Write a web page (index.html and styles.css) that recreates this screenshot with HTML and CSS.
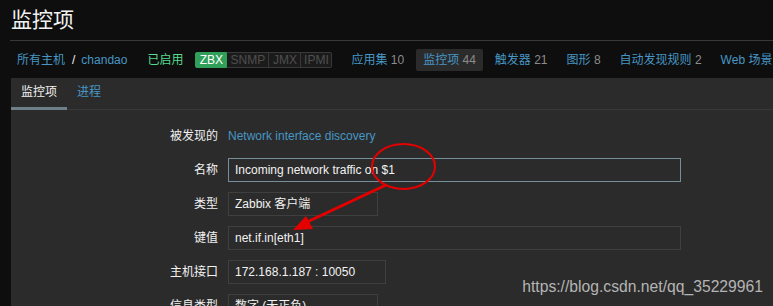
FILE: index.html
```html
<!DOCTYPE html>
<html lang="zh-CN">
<head>
    <meta charset="UTF-8">
    <title>监控项 - Zabbix</title>
    <link rel="stylesheet" href="styles.css">
</head>
<body>
    <div class="page">
        <!-- Header -->
        <div class="header">
            <h1>监控项</h1>
        </div>

        <!-- Host navigation -->
        <div class="host-nav">
            <span class="breadcrumb">
                <a href="#">所有主机</a><span class="slash">/</span><a href="#">chandao</a>
            </span>
            <span class="status-on">已启用</span>
            <span class="badges">
                <span class="badge badge-on zbx">ZBX</span>
                <span class="badge snmp">SNMP</span>
                <span class="badge jmx">JMX</span>
                <span class="badge ipmi">IPMI</span>
            </span>
            <a class="nav-item" href="#">应用集 <span class="count">10</span></a>
            <a class="nav-item selected" href="#">监控项 <span class="count">44</span></a>
            <a class="nav-item" href="#">触发器 <span class="count">21</span></a>
            <a class="nav-item" href="#">图形 <span class="count">8</span></a>
            <a class="nav-item" href="#">自动发现规则 <span class="count">2</span></a>
            <a class="nav-item" href="#">Web 场景</a>
        </div>

        <!-- Main panel -->
        <div class="panel">
            <div class="tabs">
                <span class="tab active">监控项</span>
                <a class="tab" href="#">进程</a>
            </div>

            <div class="form">
                <div class="label">被发现的</div>
                <div class="value"><a href="#">Network interface discovery</a></div>

                <div class="label">名称</div>
                <div class="value"><div class="field wide focused">Incoming network traffic on $1</div></div>

                <div class="label">类型</div>
                <div class="value"><div class="field narrow">Zabbix 客户端</div></div>

                <div class="label">键值</div>
                <div class="value"><div class="field wide">net.if.in[eth1]</div></div>

                <div class="label">主机接口</div>
                <div class="value"><div class="field iface">172.168.1.187 : 10050</div></div>

                <div class="label">信息类型</div>
                <div class="value"><div class="field narrow">数字 (无正负)</div></div>
            </div>
        </div>
    </div>

    <!-- Screenshot annotation -->
    <svg class="annotation" width="773" height="306" viewBox="0 0 773 306">
        <ellipse cx="403.5" cy="166.5" rx="31.5" ry="22.5" fill="none" stroke="#e50000" stroke-width="2"/>
        <line x1="386" y1="185" x2="305" y2="223" stroke="#e50000" stroke-width="3"/>
        <polygon points="293,230 306,216 313,229" fill="#e50000"/>
    </svg>

    <div class="watermark">https://blog.csdn.net/qq_35229961</div>
</body>
</html>
```

FILE: styles.css
```css
body {
    margin: 0;
    background: #0e0e0e;
    color: #f2f2f2;
    font-family: "Liberation Sans", Arial, "Noto Sans CJK SC", sans-serif;
    font-size: 12px;
    line-height: 14px;
    overflow: hidden;
}

a {
    color: #4796c4;
    text-decoration: none;
}

.page {
    padding-left: 10px;
}

/* Header */
.header {
    height: 40px;
    display: flex;
    align-items: center;
    border-bottom: 1px solid #383838;
}

.header h1 {
    margin: 0 0 0 1px;
    font-size: 21px;
    font-weight: normal;
    line-height: 24px;
}

/* Host navigation */
.host-nav {
    height: 37px;
    display: flex;
    align-items: center;
    padding-left: 7px;
    white-space: nowrap;
}

.breadcrumb .slash {
    color: #f2f2f2;
    margin: 0 6px 0 7px;
}

.status-on {
    color: #59db8f;
    margin-left: 20px;
}

.badges {
    display: flex;
    margin-left: 12px;
    margin-right: 12px;
}

.badge {
    box-sizing: border-box;
    height: 16px;
    line-height: 14px;
    text-align: center;
    color: #4f4f4f;
    background: #1b1b1b;
    border: 1px solid #383838;
    border-left: none;
}

.badge.zbx { width: 32px; }
.badge.snmp { width: 42px; }
.badge.jmx { width: 32px; }
.badge.ipmi { width: 31px; }

.badge:last-child {
    border-radius: 0 2px 2px 0;
}

.badge.badge-on {
    color: #fff;
    background: #2f9f5a;
    border-color: #2f9f5a;
    border-left: 1px solid #2f9f5a;
    border-radius: 2px 0 0 2px;
}

.nav-item {
    padding: 4px 7px;
    margin-right: 5px;
    line-height: 14px;
    border-radius: 2px;
}

.nav-item .count {
    color: #8c8c8c;
}

.nav-item.selected {
    background: #2b2b2b;
}

/* Main panel */
.panel {
    margin-left: 1px;
    background: #2b2b2b;
    height: 240px;
}

.tabs {
    display: flex;
    border-bottom: 1px solid #383838;
}

.tab {
    height: 29px;
    line-height: 29px;
    padding: 0 10px;
    border-bottom: 3px solid transparent;
    margin-bottom: -1px;
}

.tab.active {
    color: #f2f2f2;
    border-bottom-color: #6e7f88;
}

.form {
    display: grid;
    grid-template-columns: 207px 1fr;
    column-gap: 10px;
    row-gap: 10px;
    padding-top: 14px;
}

.label {
    height: 24px;
    line-height: 24px;
    text-align: right;
}

.value {
    height: 24px;
    line-height: 24px;
}

.field {
    box-sizing: border-box;
    height: 24px;
    line-height: 22px;
    padding: 0 6px;
    border: 1px solid #3f3f3f;
    background: #2b2b2b;
    color: #f2f2f2;
}

.field.wide {
    width: 453px;
}

.field.narrow {
    width: 150px;
}

.field.iface {
    width: 158px;
}

.field.focused {
    border-color: #768d9a;
}

/* Annotation overlay */
.annotation {
    position: absolute;
    top: 0;
    left: 0;
    pointer-events: none;
}

.watermark {
    position: absolute;
    top: 278px;
    right: 10px;
    font-family: "Liberation Sans", Arial, sans-serif;
    font-size: 15.7px;
    line-height: 18px;
    color: #b4b4b4;
}
```
